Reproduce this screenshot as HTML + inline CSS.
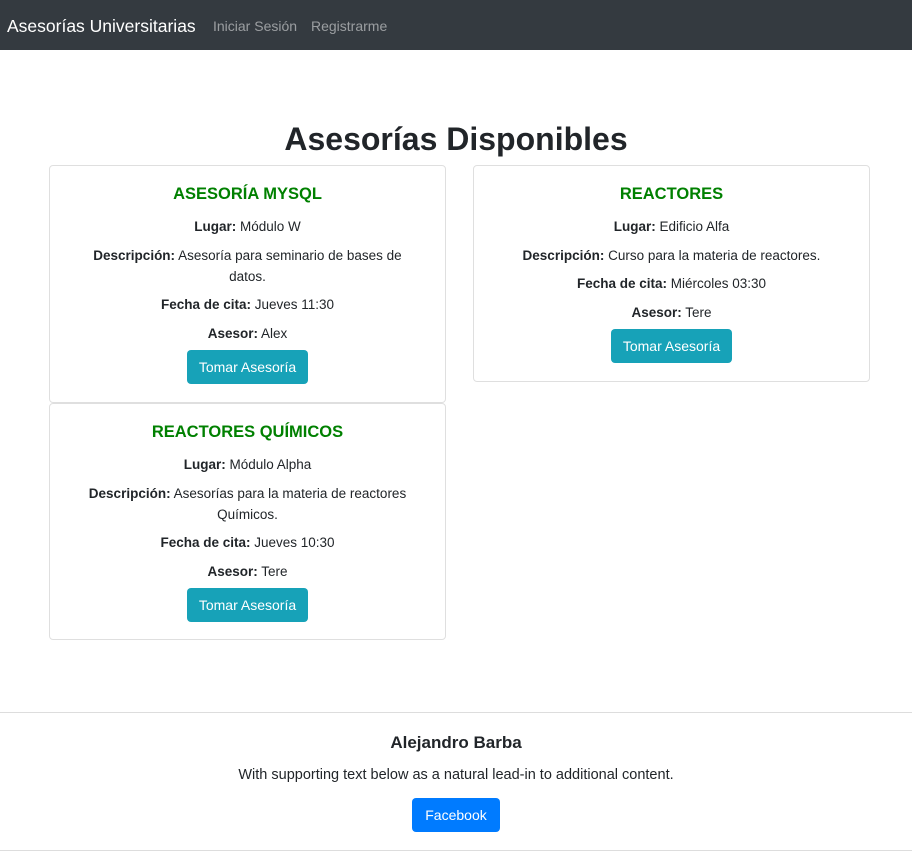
<!DOCTYPE html>
<html><head><meta charset="utf-8"><style>
*{box-sizing:border-box;margin:0;padding:0}
body{width:912px;height:851px;font-family:"Liberation Sans",sans-serif;color:#212529;background:#fff;position:relative;overflow:hidden}
.nav{position:absolute;left:0;top:0;width:912px;height:50px;background:#343a40}
.brand{position:absolute;left:7px;top:15px;font-size:17.5px;color:#fff;line-height:22px}
.l1{position:absolute;left:213px;top:17px;font-size:14px;color:rgba(255,255,255,.5);line-height:18px}
.l2{position:absolute;left:311px;top:17px;font-size:14px;color:rgba(255,255,255,.5);line-height:18px}
h1{position:absolute;left:0;width:912px;top:117px;text-align:center;font-size:32px;font-weight:bold;line-height:44px}
.card{position:absolute;width:397px;border:1px solid rgba(0,0,0,.125);border-radius:4px;text-align:center;padding:16px 18px 0}
.card h5{color:#008000;font-size:16.5px;font-weight:bold;line-height:24px;margin-bottom:10px}
.card p{font-size:13.5px;line-height:21px;margin-bottom:7.5px}
.btn{display:inline-block;background:#17a2b8;color:#fff;font-size:14px;line-height:34px;height:34px;padding:0 12px;border-radius:4px;margin-top:-1px}
.foot{position:absolute;left:0;top:712px;width:912px;height:139px;border-top:1px solid #ddd;border-bottom:1px solid #ddd;text-align:center}
.foot h5{font-size:17px;font-weight:bold;margin-top:19px;line-height:22px}
.foot p{font-size:14.5px;margin-top:11px;line-height:20px}
.fb{display:inline-block;margin-top:13px;background:#007bff;color:#fff;font-size:14px;height:34px;line-height:34px;padding:0 13px;border-radius:4px}
</style></head><body>
<div class="nav"><span class="brand">Asesorías Universitarias</span><span class="l1">Iniciar Sesión</span><span class="l2">Registrarme</span></div>
<h1>Asesorías Disponibles</h1>
<div class="card" style="left:49px;top:165px;height:238px">
<h5>ASESORÍA MYSQL</h5>
<p><b>Lugar:</b> Módulo W</p>
<p><b>Descripción:</b> Asesoría para seminario de bases de<br>datos.</p>
<p><b>Fecha de cita:</b> Jueves 11:30</p>
<p><b>Asesor:</b> Alex</p>
<span class="btn">Tomar Asesoría</span>
</div>
<div class="card" style="left:473px;top:165px;height:217px">
<h5>REACTORES</h5>
<p><b>Lugar:</b> Edificio Alfa</p>
<p><b>Descripción:</b> Curso para la materia de reactores.</p>
<p><b>Fecha de cita:</b> Miércoles 03:30</p>
<p><b>Asesor:</b> Tere</p>
<span class="btn">Tomar Asesoría</span>
</div>
<div class="card" style="left:49px;top:403px;height:237px">
<h5>REACTORES QUÍMICOS</h5>
<p><b>Lugar:</b> Módulo Alpha</p>
<p><b>Descripción:</b> Asesorías para la materia de reactores<br>Químicos.</p>
<p><b>Fecha de cita:</b> Jueves 10:30</p>
<p><b>Asesor:</b> Tere</p>
<span class="btn">Tomar Asesoría</span>
</div>
<div class="foot">
<h5>Alejandro Barba</h5>
<p>With supporting text below as a natural lead-in to additional content.</p>
<span class="fb">Facebook</span>
</div>
</body></html>
